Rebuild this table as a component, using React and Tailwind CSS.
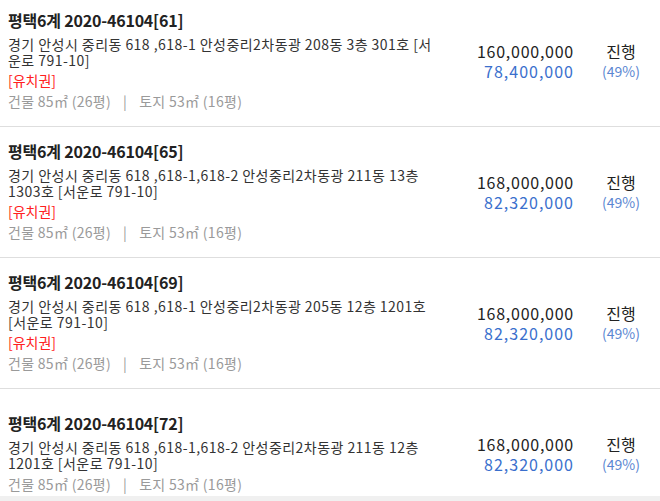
import React from 'react';

const items = [
  {
    title: '평택6계 2020-46104[61]',
    address: '경기 안성시 중리동 618 ,618-1 안성중리2차동광 208동 3층 301호 [서운로 791-10]',
    lien: true,
    price: '160,000,000',
    bid: '78,400,000',
  },
  {
    title: '평택6계 2020-46104[65]',
    address: '경기 안성시 중리동 618 ,618-1,618-2 안성중리2차동광 211동 13층 1303호 [서운로 791-10]',
    lien: true,
    price: '168,000,000',
    bid: '82,320,000',
  },
  {
    title: '평택6계 2020-46104[69]',
    address: '경기 안성시 중리동 618 ,618-1 안성중리2차동광 205동 12층 1201호 [서운로 791-10]',
    lien: true,
    price: '168,000,000',
    bid: '82,320,000',
  },
  {
    title: '평택6계 2020-46104[72]',
    address: '경기 안성시 중리동 618 ,618-1,618-2 안성중리2차동광 211동 12층 1201호 [서운로 791-10]',
    lien: false,
    price: '168,000,000',
    bid: '82,320,000',
  },
];

const Row = ({ item }) => (
  <div className="flex items-center min-h-[131px] border-b border-[#dedede] px-2">
    <div className="w-[436px] shrink-0 pt-[12px] pb-[17px]">
      <div className="text-[16px] leading-[24px] font-bold text-[#222] tracking-[-0.2px]">{item.title}</div>
      <div className="mt-[4px] text-[14px] leading-[16px] text-[#333] tracking-[0.45px]">{item.address}</div>
      {item.lien && <div className="mt-[4px] text-[14px] leading-[16px] text-[#ff2020]">[유치권]</div>}
      <div className="mt-[5px] text-[14px] leading-[16px] text-[#9a9a9a] tracking-[0.3px]">
        건물 85㎡ (26평)<span className="mx-[12px]">|</span>토지 53㎡ (16평)
      </div>
    </div>
    <div className="flex-1 text-right text-[16px] leading-[20px] tracking-[0.75px]">
      <div className="text-[#222]">{item.price}</div>
      <div className="text-[#3a6fcd] tracking-[1px]">{item.bid}</div>
    </div>
    <div className="w-[78px] shrink-0 text-center pl-[16px]">
      <div className="text-[16px] leading-[20px] text-[#222]">진행</div>
      <div className="text-[14px] leading-[20px] text-[#5b87d2]">(49%)</div>
    </div>
  </div>
);

export default function App() {
  return (
    <div className="w-[660px] h-[501px] bg-[#f0f0f0] overflow-hidden font-['Noto_Sans_CJK_KR',sans-serif]">
      <div className="h-[496px] overflow-hidden bg-white">
        <div className="-mt-[4px]">
          {items.map((item, i) => (
            <Row key={i} item={item} />
          ))}
        </div>
      </div>
    </div>
  );
}
